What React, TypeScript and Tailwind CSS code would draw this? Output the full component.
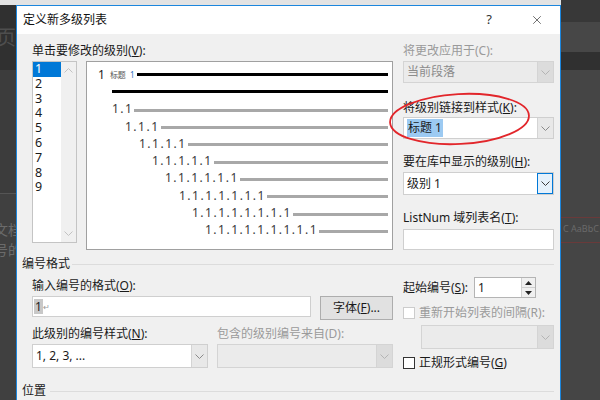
import React from "react";
import { X } from "lucide-react";

const font = "font-['Noto_Sans','Noto_Sans_CJK_SC',sans-serif]";

function Chevron({ color = "#8a8a8a" }: { color?: string }) {
  return (
    <svg width="9" height="5" viewBox="0 0 9 5">
      <polyline points="0.5,0.5 4.5,4.5 8.5,0.5" fill="none" stroke={color} strokeWidth="1" />
    </svg>
  );
}

function Combo({
  children,
  className,
  disabled,
  focused,
}: {
  children?: React.ReactNode;
  className: string;
  disabled?: boolean;
  focused?: boolean;
}) {
  return (
    <div
      className={`flex border ${
        disabled ? "border-[#d4d4d4] bg-[#ebebeb] text-[#8c8c8c]" : "border-[#cfcfcf] bg-white text-[#1a1a1a]"
      } ${className}`}
    >
      <div className="flex flex-1 items-center pl-[3px] text-[12px]">{children}</div>
      <div
        className={`flex w-[16px] items-center justify-center ${
          focused
            ? "border border-[#0078d7] bg-[#e5f1fb]"
            : disabled
              ? "border-l border-[#d4d4d4] bg-[#dcdcdc]"
              : "border-l border-[#d4d4d4] bg-[#e8e8e8]"
        }`}
      >
        <Chevron color={focused ? "#3a3a3a" : disabled ? "#b4b4b4" : "#8a8a8a"} />
      </div>
    </div>
  );
}

function Label({ children, disabled, className = "" }: { children: React.ReactNode; disabled?: boolean; className?: string }) {
  return (
    <div className={`h-[18px] whitespace-nowrap text-[12px] leading-[18px] ${disabled ? "text-[#9a9a9a]" : "text-[#1a1a1a]"} ${className}`}>
      {children}
    </div>
  );
}

function Checkbox({ disabled, label }: { disabled?: boolean; label: React.ReactNode }) {
  return (
    <div className="flex h-[14px] items-center">
      <div className={`h-[12px] w-[12px] border bg-white ${disabled ? "border-[#cccccc]" : "border-[#333333]"}`} />
      <span className={`ml-[4px] whitespace-nowrap text-[12px] ${disabled ? "text-[#9a9a9a]" : "text-[#1a1a1a]"}`}>{label}</span>
    </div>
  );
}

const indents = ["pl-[25px]", "pl-[38px]", "pl-[52px]", "pl-[65px]", "pl-[78px]", "pl-[92px]", "pl-[105px]", "pl-[118px]"];

function Preview() {
  return (
    <div className="ml-[9px] h-[189px] w-[307px] border border-[#a0a0a0] bg-white pt-[4px] pr-[4px]">
      <div className="flex h-[17.3px] items-center pl-[11px]">
        <span className="text-[12px] text-[#222]">1</span>
        <span className="ml-[5px] text-[8px] text-[#555]">标题</span>
        <span className="ml-[4px] text-[8px] text-[#2a6fc0]">1</span>
        <div className="ml-[3px] h-[3px] flex-1 bg-black" />
      </div>
      <div className="flex h-[17.3px] items-center pl-[25px]">
        <div className="h-[3px] flex-1 bg-black" />
      </div>
      {indents.map((pl, i) => (
        <div key={i} className={`flex h-[17.3px] items-center ${pl}`}>
          <span className="whitespace-nowrap text-[12px] tracking-[1.5px] text-[#3a3a3a]">
            {Array(i + 2).fill("1").join(".")}
          </span>
          <div className="ml-[1px] mt-[2px] h-[3px] flex-1 bg-[#a8a8a8]" />
        </div>
      ))}
    </div>
  );
}

function LevelList() {
  return (
    <div className="flex h-[182px] w-[45px] border border-[#c4c4c4] bg-white">
      <div className="w-[28px] text-[12.5px] text-[#1a1a1a]">
        {["1", "2", "3", "4", "5", "6", "7", "8", "9"].map((n, i) => (
          <div
            key={n}
            className={`h-[14.8px] pl-[2px] leading-[14.8px] ${i === 0 ? "bg-[#0078d7] text-white" : ""}`}
          >
            {n}
          </div>
        ))}
      </div>
      <div className="flex flex-1 flex-col items-center justify-between bg-[#f0f0f0] py-[6px]">
        <svg width="9" height="5" viewBox="0 0 9 5">
          <polyline points="0.5,4.5 4.5,0.5 8.5,4.5" fill="none" stroke="#c2c2c2" strokeWidth="1" />
        </svg>
        <Chevron color="#c2c2c2" />
      </div>
    </div>
  );
}

function Dialog() {
  return (
    <div className={`relative flex h-[395px] w-[545px] flex-col border-x border-t border-[#1c86dd] ${font}`}>
      <div className="flex h-[28px] items-center bg-white pl-[6px] text-[12px] text-[#111]">
        <span>定义新多级列表</span>
        <span className="ml-auto mr-[38px] text-[13px] text-[#333]">?</span>
        <X size={14} strokeWidth={1.2} className="mr-[16px] text-[#333]" />
      </div>

      <div className="flex-1 bg-[#f0f0f0]">
        {/* top section */}
        <div className="flex pl-[15px] pr-[6px] pt-[8px]">
          <div className="w-[361px]">
            <Label>
              单击要修改的级别(<u>V</u>):
            </Label>
            <div className="mt-[1px] flex">
              <LevelList />
              <Preview />
            </div>
          </div>
          <div className="ml-[10px] flex-1">
            <Label disabled>将更改应用于(C):</Label>
            <Combo disabled className="mt-[1px] h-[22px]">
              当前段落
            </Combo>
            <Label className="mt-[16px]">
              将级别链接到样式(<u>K</u>):
            </Label>
            <Combo className="h-[22px]">
              <span className="bg-[#9ccaf2] px-[1px]">标题 1</span>
            </Combo>
            <Label className="mt-[14px]">
              要在库中显示的级别(<u>H</u>):
            </Label>
            <Combo focused className="mt-[1px] h-[23px]">
              级别 1
            </Combo>
            <Label className="mt-[14px]">
              ListNum 域列表名(<u>T</u>):
            </Label>
            <div className="mt-[2px] h-[21px] border border-[#cfcfcf] bg-white" />
          </div>
        </div>

        {/* 编号格式 */}
        <div className="mt-[6px] flex h-[16px] items-center pl-[5px] pr-[6px]">
          <span className="text-[12px] text-[#1a1a1a]">编号格式</span>
          <div className="ml-[2px] h-px flex-1 bg-[#dcdcdc]" />
        </div>

        <div className="mt-[5px] flex pl-[15px] pr-[6px]">
          <div className="w-[361px]">
            <Label>
              输入编号的格式(<u>O</u>):
            </Label>
            <div className="mt-[1px] flex items-start">
              <div className="flex h-[21px] w-[279px] items-center border border-[#cfcfcf] bg-white pl-[1px]">
                <span className="bg-[#c8c8c8] px-[1px] text-[12px] leading-[15px] text-[#222]">1</span>
                <span className="text-[8px] text-[#999]">↵</span>
              </div>
              <div className="ml-[9px] flex h-[24px] w-[73px] items-center justify-center border border-[#adadad] bg-[#e1e1e1] text-[12px] text-[#1a1a1a]">
                字体(<u>F</u>)...
              </div>
            </div>
            <div className="mt-[5px] flex">
              <Label className="w-[185px]">
                此级别的编号样式(<u>N</u>):
              </Label>
              <Label disabled>包含的级别编号来自(D):</Label>
            </div>
            <div className="mt-[1px] flex">
              <Combo className="h-[24px] w-[176px]">1, 2, 3, ...</Combo>
              <Combo disabled className="ml-[9px] h-[24px] w-[176px]" />
            </div>
          </div>
          <div className="ml-[10px] flex-1">
            <div className="flex h-[21px] items-center">
              <span className="w-[71px] whitespace-nowrap text-[12px] text-[#1a1a1a]">
                起始编号(<u>S</u>):
              </span>
              <div className="flex h-[21px] w-[62px] border border-[#b4b4b4] bg-white">
                <span className="flex-1 pl-[3px] text-[12px] leading-[19px] text-[#1a1a1a]">1</span>
                <div className="flex w-[14px] flex-col border-l border-[#d0d0d0] bg-[#f0f0f0]">
                  <div className="flex flex-1 items-center justify-center border-b border-[#d0d0d0]">
                    <svg width="7" height="4" viewBox="0 0 7 4">
                      <polygon points="0,4 3.5,0 7,4" fill="#222" />
                    </svg>
                  </div>
                  <div className="flex flex-1 items-center justify-center">
                    <svg width="7" height="4" viewBox="0 0 7 4">
                      <polygon points="0,0 3.5,4 7,0" fill="#222" />
                    </svg>
                  </div>
                </div>
              </div>
            </div>
            <div className="mt-[8px]">
              <Checkbox disabled label="重新开始列表的间隔(R):" />
            </div>
            <Combo disabled className="ml-[18px] mt-[5px] h-[24px]" />
            <div className="mt-[7px]">
              <Checkbox
                label={
                  <>
                    正规形式编号(<u>G</u>)
                  </>
                }
              />
            </div>
          </div>
        </div>

        <div className="mt-[13px] flex h-[16px] items-center pl-[5px] pr-[6px]">
          <span className="text-[12px] text-[#1a1a1a]">位置</span>
          <div className="ml-[4px] h-px flex-1 bg-[#dcdcdc]" />
        </div>
      </div>

      {/* red annotation ellipse */}
      <svg className="pointer-events-none absolute left-[371px] top-[86px]" width="145" height="56" viewBox="0 0 145 56">
        <ellipse cx="71.5" cy="27" rx="69.5" ry="25" fill="none" stroke="#e2262b" strokeWidth="1.8" transform="rotate(-3 71.5 27)" />
      </svg>
    </div>
  );
}

export default function App() {
  return (
    <div className={`flex h-[400px] w-[600px] overflow-hidden bg-[#434343] ${font}`}>
      <div className="flex w-[16px] flex-col">
        <div className="h-[5px] bg-[#e3e3e3]" />
        <div className="flex h-[65px] items-center overflow-hidden bg-[#303030]">
          <span className="-ml-[4px] text-[20px] text-[#4e4e4e]">页</span>
        </div>
        <div className="h-[123px] bg-[#3c3c3c]" />
        <div className="flex-1 overflow-hidden border-t border-[#555] bg-[#404040] pt-[26px]">
          <div className="-ml-[6px] whitespace-nowrap text-[14px] leading-[20px] text-[#6b6b6b]">文档</div>
          <div className="-ml-[6px] whitespace-nowrap text-[14px] leading-[20px] text-[#6b6b6b]">号的</div>
        </div>
      </div>
      <div className="flex w-[545px] flex-col">
        <div className="h-[5px] bg-[#e3e3e3]" />
        <Dialog />
      </div>
      <div className="flex flex-1 flex-col">
        <div className="h-[22px] bg-[#383838]" />
        <div className="h-[30px] bg-[#474747]" />
        <div className="h-[18px] bg-[#303030]" />
        <div className="flex-1 bg-[#454545] pt-[147px]">
          <div className="h-px bg-[#6a3a3a]" />
          <div className="mt-[4px] whitespace-nowrap pl-[2px] text-[9px] text-[#6a6a6a]">C AaBbC</div>
          <div className="mt-[6px] h-px bg-[#6a3a3a]" />
        </div>
      </div>
    </div>
  );
}
